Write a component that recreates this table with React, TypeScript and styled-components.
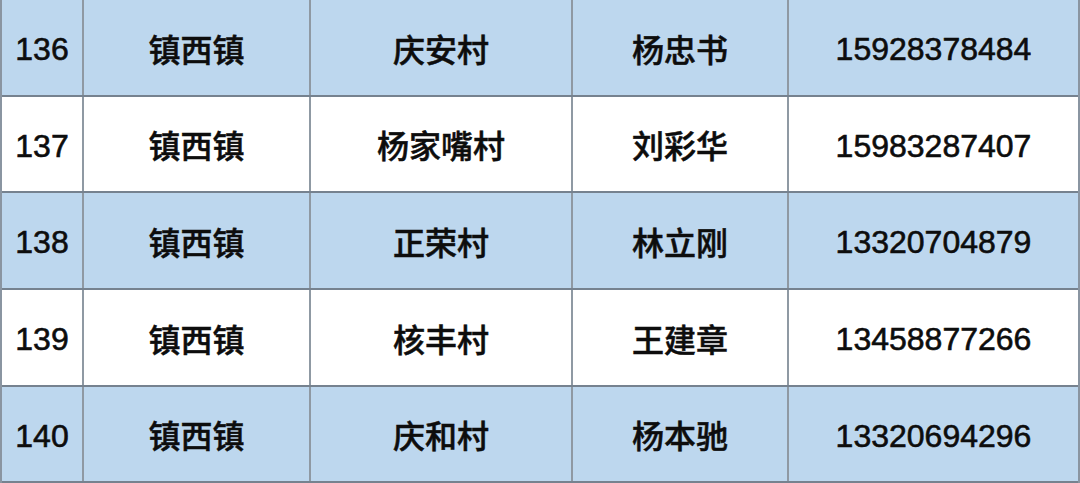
import styled, {createGlobalStyle} from "styled-components";

type Row = {
    no: number;
    town: string;
    village: string;
    name: string;
    phone: string;
}

const rows: Row[] = [
    {no: 136, town: "镇西镇", village: "庆安村", name: "杨忠书", phone: "15928378484"},
    {no: 137, town: "镇西镇", village: "杨家嘴村", name: "刘彩华", phone: "15983287407"},
    {no: 138, town: "镇西镇", village: "正荣村", name: "林立刚", phone: "13320704879"},
    {no: 139, town: "镇西镇", village: "核丰村", name: "王建章", phone: "13458877266"},
    {no: 140, town: "镇西镇", village: "庆和村", name: "杨本驰", phone: "13320694296"},
];

const GlobalStyle = createGlobalStyle`
    html, body {
        margin: 0;
        padding: 0;
        background: #ffffff;
    }
`

export default function App() {
    return (
        <>
            <GlobalStyle/>
            <Table>
                {rows.map((r, i) => {
                    const shaded = i % 2 === 0;
                    return (
                        <TableRow key={r.no} $shaded={shaded}>
                            <Cell $latin>{r.no}</Cell>
                            <Cell>{r.town}</Cell>
                            <Cell>{r.village}</Cell>
                            <Cell>{r.name}</Cell>
                            <Cell $latin>{r.phone}</Cell>
                        </TableRow>
                    )
                })}
            </Table>
        </>
    );
}

const Table = styled.div`
    width: 1080px;
    height: 483px;
    display: grid;
    grid-template-rows: 97px 96px 97px 97px 96px;
    box-sizing: border-box;
    border-left: 2px solid #8a95a1;
    border-right: 2px solid #8a95a1;
`

const TableRow = styled.div<{ $shaded: boolean }>`
    display: grid;
    grid-template-columns: 82px 227px 262px 216px 289px;
    background: ${p => p.$shaded ? "#bdd7ee" : "#ffffff"};
    border-bottom: 2px solid #76828f;
    box-sizing: border-box;
`

const Cell = styled.div<{ $latin?: boolean }>`
    display: flex;
    align-items: center;
    justify-content: center;
    border-right: 2px solid #8f99a3;
    color: #0d0d0d;
    font-size: 32px;
    font-family: ${p => p.$latin
            ? `"Liberation Sans", Arial, sans-serif`
            : `"Noto Sans CJK SC", sans-serif`};
    font-weight: ${p => p.$latin ? 400 : 500};
    -webkit-text-stroke: ${p => p.$latin ? "0.6px #0d0d0d" : "0.5px #0d0d0d"};
    padding-top: ${p => p.$latin ? "3px" : "0"};
    line-height: 1;

    &:last-child {
        border-right: none;
    }
`
